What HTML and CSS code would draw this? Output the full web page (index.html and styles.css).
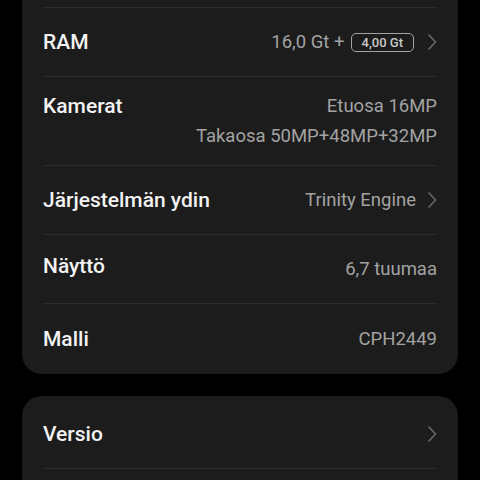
FILE: index.html
```html
<!DOCTYPE html>
<html lang="fi">
<head>
    <meta charset="UTF-8">
    <meta name="viewport" content="width=device-width, initial-scale=1.0">
    <title>Tietoja puhelimesta</title>
    <link rel="stylesheet" href="styles.css">
</head>
<body>
    <div class="screen">
        <div class="card card-cut">
            <div class="row">
                <span class="label">RAM</span>
                <span class="value">
                    16,0 Gt +
                    <span class="badge">4,00 Gt</span>
                    <svg class="chevron" viewBox="0 0 10 18"><path d="M1.5 1.5 L8.5 9 L1.5 16.5"/></svg>
                </span>
            </div>
            <div class="row row-top">
                <span class="label">Kamerat</span>
                <span class="value value-lines">
                    <span>Etuosa 16MP</span>
                    <span>Takaosa 50MP+48MP+32MP</span>
                </span>
            </div>
            <div class="row">
                <span class="label">Järjestelmän ydin</span>
                <span class="value">
                    Trinity Engine
                    <svg class="chevron" viewBox="0 0 10 18"><path d="M1.5 1.5 L8.5 9 L1.5 16.5"/></svg>
                </span>
            </div>
            <div class="row">
                <span class="label label-up">Näyttö</span>
                <span class="value">6,7 tuumaa</span>
            </div>
            <div class="row row-last">
                <span class="label">Malli</span>
                <span class="value">CPH2449</span>
            </div>
        </div>

        <div class="card card-second">
            <div class="row">
                <span class="label">Versio</span>
                <span class="value">
                    <svg class="chevron" viewBox="0 0 10 18"><path d="M1.5 1.5 L8.5 9 L1.5 16.5"/></svg>
                </span>
            </div>
            <div class="row"></div>
        </div>
    </div>
</body>
</html>
```

FILE: styles.css
```css
* {
    box-sizing: border-box;
}

body {
    margin: 0;
    background-color: #000;
    font-family: Roboto, "Noto Sans", Arial, sans-serif;
    overflow: hidden;
}

.screen {
    padding: 0 22px;
    height: 480px;
    overflow: hidden;
}

.card {
    background-color: #1c1c1c;
    border-radius: 20px;
    padding: 0 21px;
    margin-bottom: 22px;
}

.card-cut {
    border-top-left-radius: 0;
    border-top-right-radius: 0;
    padding-top: 7px;
}

.card-second {
    padding-top: 3px;
}

.row {
    display: flex;
    justify-content: space-between;
    align-items: center;
    min-height: 69px;
    padding: 14px 0;
    border-top: 1px solid #2b2b2b;
}

.row-last {
    min-height: 71px;
}

.card-second .row:first-child {
    border-top: none;
}

.row-top {
    align-items: flex-start;
}

.label {
    color: #f2f2f2;
    font-size: 21px;
    font-weight: 500;
    line-height: 30px;
}

.label-up {
    position: relative;
    top: -3px;
}

.value {
    display: flex;
    align-items: center;
    color: #a3a3a3;
    font-size: 18.5px;
    line-height: 30px;
}

.value-lines {
    flex-direction: column;
    align-items: flex-end;
}

.badge {
    display: inline-block;
    margin-left: 6px;
    padding: 0 10px;
    height: 19px;
    line-height: 17px;
    border: 1px solid #a3a3a3;
    border-radius: 5px;
    font-size: 13px;
    font-weight: 500;
    color: #c8c8c8;
}

.chevron {
    width: 10px;
    height: 18px;
    margin-left: 11px;
    fill: none;
    stroke: #6b6b6b;
    stroke-width: 1.5;
}

.badge + .chevron {
    margin-left: 13px;
}
```
